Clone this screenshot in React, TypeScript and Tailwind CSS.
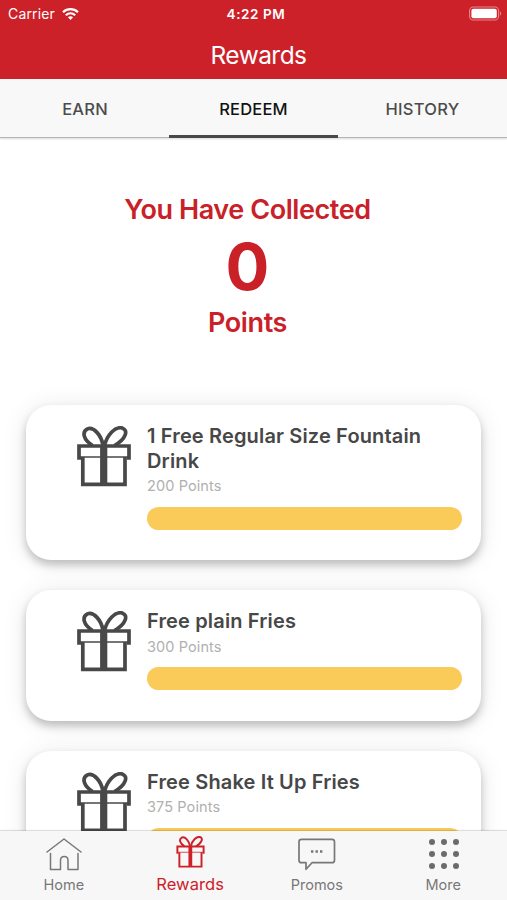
import React from 'react';

interface Reward {
  id: number;
  title: string;
  points: number;
}

const REWARDS: Reward[] = [
  { id: 1, title: '1 Free Regular Size Fountain Drink', points: 200 },
  { id: 2, title: 'Free plain Fries', points: 300 },
  { id: 3, title: 'Free Shake It Up Fries', points: 375 },
];

const GiftIcon: React.FC<{ className?: string; strokeWidth?: number }> = ({ className, strokeWidth = 3.7 }) => (
  <svg viewBox="0 0 54 61" className={className} fill="none" stroke="currentColor" strokeWidth={strokeWidth}>
    {/* Bow */}
    <path d="M26 19.5C24.5 9 16.5 0.5 10.5 2.9C4.5 6 6.5 14 15.5 19.5" />
    <path d="M27.5 19.5C30 9 38 0.5 45 1.9C51.5 4 49.5 12.5 37.5 19.5" />
    {/* Box */}
    <path d="M4 31.8H2V20H52V31.8H50" />
    <path d="M5.8 31V58.4H48V31" />
    <path d="M2 31H52" strokeWidth={strokeWidth * 0.4} />
    <path d="M26.7 19V59" strokeWidth={strokeWidth * 1.95} />
  </svg>
);

const StatusBar: React.FC = () => (
  <div className="grid grid-cols-3 items-center h-[27px] pl-2 pr-[6px] text-white">
    <div className="flex items-center gap-[7px]">
      <span className="text-[14px] tracking-[0.15px]">Carrier</span>
      <svg viewBox="0 0 17 12" className="w-[17px] h-3" fill="none" stroke="currentColor" strokeWidth="2.2">
        <path d="M1 4.2C5.3 0.2 11.7 0.2 16 4.2" />
        <path d="M3.8 7.2C6.5 4.7 10.5 4.7 13.2 7.2" />
        <path d="M8.5 12L5.9 9.2C7.3 7.9 9.7 7.9 11.1 9.2Z" fill="currentColor" stroke="none" />
      </svg>
    </div>
    <span className="pl-[3px] pt-px text-center text-[13.5px] font-semibold tracking-[0.6px] whitespace-nowrap">4:22 PM</span>
    <svg viewBox="0 0 33 15" className="justify-self-end w-[33px] h-[15px] -mr-px">
      <rect x="0.6" y="1" width="29" height="13" rx="3.8" fill="none" stroke="#e9868b" strokeWidth="1.1" />
      <rect x="2.4" y="2.8" width="25.4" height="9.4" rx="2" fill="#fff" />
      <path d="M31 5.3C32.6 6 32.6 9 31 9.7Z" fill="#e9868b" />
    </svg>
  </div>
);

const Tabs: React.FC = () => (
  <div className="relative z-10 grid grid-cols-3 h-[59px] bg-[#f8f8f8] text-[16.5px] font-medium text-[#4c4c4c] border-b border-[#b5b5b5] shadow-[0_1px_2px_rgba(0,0,0,0.15)]">
    <button className="pt-[3px] pl-px tracking-[0.2px]">EARN</button>
    <button className="pt-1 -mb-px text-[#111] border-b-[3px] border-[#484848] tracking-[0.2px]">REDEEM</button>
    <button className="pt-[3px] tracking-[0.3px]">HISTORY</button>
  </div>
);

const RewardCard: React.FC<{ reward: Reward }> = ({ reward }) => (
  <article className="flex w-[455px] pl-[51px] pr-[19px] pt-[21px] pb-[30.4px] rounded-[25px] bg-white shadow-[0_5px_9px_rgba(0,0,0,0.22),0_2px_26px_rgba(0,0,0,0.09)]">
    <GiftIcon className="shrink-0 w-[54px] h-[61px] text-[#484848]" />
    <div className="flex-1 ml-[15.5px] -mt-[2px]">
      <h2 className="pl-[0.5px] text-[20px] leading-[24.6px] font-semibold tracking-[0.15px] text-[#474747]">{reward.title}</h2>
      <p className="mt-[4px] pl-[0.5px] text-[14.5px] leading-[18px] tracking-[0.1px] text-[#b0b0b0]">{reward.points} Points</p>
      <div className="mt-[11.5px] h-[23px] rounded-full bg-[#fbcb59]" />
    </div>
  </article>
);

const BottomNav: React.FC = () => (
  <nav className="relative z-10 grid grid-cols-4 shrink-0 h-[69px] pt-1 bg-[#f7f7f7] text-[14.5px] leading-5 text-[#777] shadow-[0_-1px_1px_rgba(0,0,0,0.13)]">
    <div className="flex flex-col items-center">
      <svg viewBox="0 0 36 40" className="w-9 h-10 ml-px" fill="none" stroke="currentColor" strokeWidth="1.5" strokeLinecap="round" strokeLinejoin="round">
        <path d="M1 17L18 4L35 17" />
        <path d="M4.5 18.5V34.5H14.5V25.5C14.5 20.3 22 20.3 22 25.5V34.5H32V18.5" />
      </svg>
      <span className="pl-px">Home</span>
    </div>
    <div className="flex flex-col items-center text-[#cd2029]">
      <div className="flex justify-center h-10 pt-px">
        <GiftIcon className="w-[29px] h-8" strokeWidth={3.7} />
      </div>
      <span className="-mt-px text-[16.5px] tracking-[0.1px]">Rewards</span>
    </div>
    <div className="flex flex-col items-center">
      <svg viewBox="0 0 38 40" className="w-[38px] h-10" fill="none" stroke="currentColor" strokeWidth="1.7" strokeLinejoin="round">
        <path d="M4 4.3H34Q36.5 4.3 36.5 6.8V25.2Q36.5 27.7 34 27.7H14L8 34.3V27.7H3.5Q1 27.7 1 25.2V6.8Q1 4.3 3.5 4.3Z" />
        <path d="M13 16.5H15.4M17.5 16.5H19.9M22 16.5H24.4" strokeWidth="2.3" />
      </svg>
      <span>Promos</span>
    </div>
    <div className="flex flex-col items-center">
      <div className="grid grid-cols-3 content-start gap-x-[6px] gap-y-[6px] h-10 pt-[4px]">
        {Array.from({ length: 9 }, (_, i) => (
          <span key={i} className="size-[6px] rounded-full bg-[#6b6b6b]" />
        ))}
      </div>
      <span className="-ml-px">More</span>
    </div>
  </nav>
);

export default function App() {
  return (
    <div className="flex flex-col h-[900px] w-[507px] overflow-hidden bg-white font-['Inter','Liberation_Sans',sans-serif]">
      <header className="shrink-0 h-[79px] bg-[#cd2129]">
        <StatusBar />
        <h1 className="pt-[10px] pl-[10px] text-center text-[24.5px] leading-9 tracking-[-0.55px] text-white">Rewards</h1>
      </header>
      <Tabs />
      <main className="flex-1 min-h-0 overflow-hidden">
        <section className="h-[267px] pt-[53px] pr-3 text-center font-semibold text-[#ca2028]">
          <p className="pt-px text-[27px] leading-9 tracking-[-0.42px]">You Have Collected</p>
          <p className="text-[65px] leading-[78px] font-bold">0</p>
          <p className="pt-px text-[27px] leading-8 tracking-[-0.4px]">Points</p>
        </section>
        <section className="flex flex-col items-start gap-[30px] pl-[26px]">
          {REWARDS.map((reward) => (
            <RewardCard key={reward.id} reward={reward} />
          ))}
        </section>
      </main>
      <BottomNav />
    </div>
  );
}
